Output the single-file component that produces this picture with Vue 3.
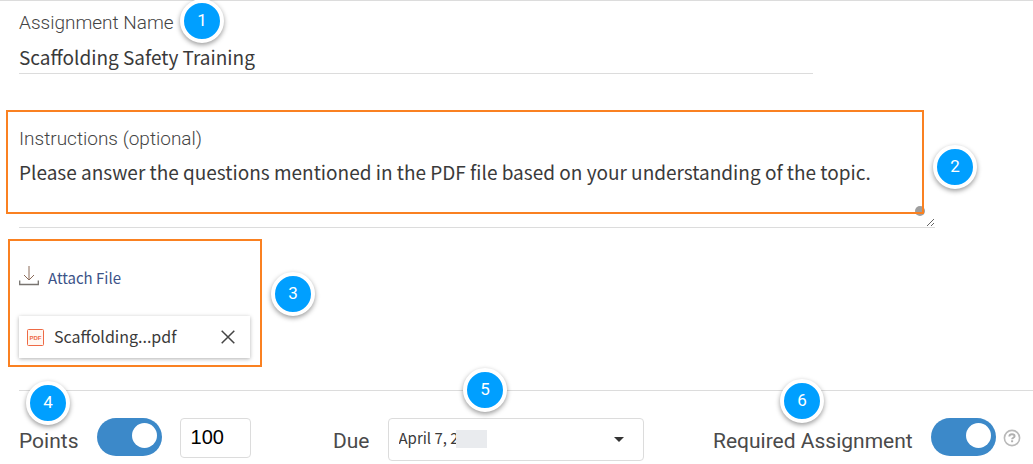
<template>
  <form class="assignment-form" @submit.prevent>
    <div class="field name-field">
      <label class="field-label" for="assignment-name">Assignment Name</label>
      <input
        id="assignment-name"
        v-model="name"
        type="text"
        class="field-input"
      />
      <span class="step step-1">1</span>
    </div>

    <div class="field instructions-field">
      <label class="field-label" for="instructions"
        >Instructions (optional)</label
      >
      <textarea
        id="instructions"
        v-model="instructions"
        class="field-input field-textarea"
        spellcheck="false"
      ></textarea>
      <span class="handle"></span>
      <span class="highlight highlight-instructions"></span>
      <span class="step step-2">2</span>
    </div>

    <div class="attach">
      <a href="#" class="attach-link" @click.prevent>
        <svg class="attach-icon" viewBox="0 0 20 20" fill="none">
          <path d="M10 0v14M5 9l5 5 5-5" stroke="#8a6a58" />
          <path d="M.7 14.500v4h18.600v-4" stroke="#77736f" stroke-width="1.300" />
        </svg>
        <span>Attach File</span>
      </a>

      <div v-if="file" class="file-card">
        <svg class="pdf-icon" viewBox="0 0 17 17">
          <rect
            x="0.500"
            y="0.500"
            width="16"
            height="16"
            rx="1"
            fill="#fff8f3"
            stroke="#ee6a45"
          />
          <text x="8.500" y="11" text-anchor="middle" class="pdf-text">PDF</text>
        </svg>
        <span class="file-name">{{ file }}</span>
        <button
          type="button"
          class="remove-button"
          aria-label="Remove file"
          @click="file = ''"
        >
          <svg viewBox="0 0 14 14" fill="none">
            <path d="M.7.7l12.600 12.600M13.300.7L.7 13.300" stroke="#444" stroke-width="1.500" />
          </svg>
        </button>
      </div>
      <span class="highlight highlight-attach"></span>
      <span class="step step-3">3</span>
    </div>

    <div class="options">
      <div class="option">
        <label class="option-label" for="points-on">Points</label>
        <input id="points-on" v-model="pointsOn" type="checkbox" class="toggle" />
        <input
          v-model="points"
          type="text"
          class="points-input"
          aria-label="Points value"
        />
        <span class="step step-4">4</span>
      </div>

      <div class="option">
        <label class="option-label" for="due">Due</label>
        <div class="select-box">
          <select id="due" v-model="due" class="due-select">
            <option>April 7, 2</option>
          </select>
          <span class="year-cover"></span>
          <span class="caret"></span>
        </div>
        <span class="step step-5">5</span>
      </div>

      <div class="option">
        <label class="option-label" for="required">Required Assignment</label>
        <input id="required" v-model="required" type="checkbox" class="toggle" />
        <button type="button" class="help-button" aria-label="Help">
          <svg viewBox="0 0 18 18" fill="none">
            <circle cx="9" cy="9" r="7.600" stroke="#b9b9b9" stroke-width="1.600" />
            <path
              d="M6.300 7.500C6.400 6 7.500 5.300 9 5.300s2.600.7 2.600 1.900c0 1.600-2.500 1.500-2.500 3.100"
              stroke="#b0b0b0"
              stroke-width="1.900"
            />
            <path d="M8.100 11.300h2v1.900h-2z" fill="#b0b0b0" />
          </svg>
        </button>
        <span class="step step-6">6</span>
      </div>
    </div>
  </form>
</template>

<script setup>
import { ref } from "vue";

const name = ref("Scaffolding Safety Training");
const instructions = ref(
  "Please answer the questions mentioned in the PDF file based on your understanding of the topic."
);
const file = ref("Scaffolding...pdf");
const pointsOn = ref(true);
const points = ref("100");
const due = ref("April 7, 2");
const required = ref(true);
</script>

<style>
body {
  margin: 0;
  background: #fff;
}
</style>

<style scoped>
.assignment-form {
  border-top: 1px solid #dcdcdc;
  padding: 10px 0 0 19px;
  font-family: "Noto Sans CJK SC", sans-serif;
  color: #3a3a3a;
}

.assignment-form *,
.assignment-form {
  box-sizing: border-box;
}

.field,
.attach,
.option,
.select-box {
  position: relative;
}

.name-field {
  max-width: 794px;
}

.instructions-field {
  max-width: 916px;
  margin-top: 53px;
}

.field-label {
  display: block;
  margin-bottom: 7px;
  font-family: Roboto, sans-serif;
  font-size: 19px;
  font-weight: 300;
  line-height: 24px;
  color: #444;
}

.field-input {
  display: block;
  width: 100%;
  height: 32px;
  padding: 0 0 2px;
  border: none;
  border-bottom: 1px solid #dcdcdc;
  outline: none;
  background: transparent;
  font-family: inherit;
  font-size: 19px;
  line-height: 28px;
  color: #3a3a3a;
}

.field-textarea {
  height: 70px;
  resize: both;
}

.highlight {
  position: absolute;
  border: 2px solid #fa8121;
  pointer-events: none;
}

.highlight-instructions {
  top: -17px;
  left: -13px;
  right: 11px;
  bottom: 14px;
}

.highlight-attach {
  top: -27px;
  left: -11px;
  width: 254px;
  bottom: -9px;
}

.handle {
  position: absolute;
  right: 10px;
  bottom: 12px;
  width: 10px;
  height: 10px;
  border-radius: 50%;
  background: #9e9e9e;
}

.step {
  position: absolute;
  width: 44px;
  height: 44px;
  border: 4px solid #fff;
  border-radius: 50%;
  background: #009fff;
  box-shadow: 0 2px 5px rgba(0, 0, 0, 0.4);
  font-family: Roboto, sans-serif;
  font-size: 17px;
  line-height: 34px;
  text-align: center;
  color: #fff;
}

.step-1 {
  top: -12px;
  left: 161px;
}

.step-2 {
  top: 18px;
  right: -42px;
}

.step-3 {
  top: 6px;
  left: 252px;
}

.step-4 {
  top: -37px;
  left: 7px;
}

.step-5 {
  top: -50px;
  left: 130px;
}

.step-6 {
  top: -39px;
  left: 67px;
}

.attach {
  margin-top: 38px;
}

.attach-link {
  display: flex;
  align-items: center;
  gap: 9px;
  width: fit-content;
  height: 24px;
  font-size: 15px;
  line-height: 24px;
  color: #3c5388;
  text-decoration: none;
}

.attach-icon {
  width: 20px;
  height: 20px;
  margin-bottom: 4px;
}

.file-card {
  display: flex;
  align-items: center;
  width: 231px;
  height: 42px;
  margin-top: 26px;
  padding: 0 14px 0 8px;
  background: #fff;
  box-shadow: 0 1px 4px rgba(0, 0, 0, 0.3);
}

.pdf-icon {
  width: 17px;
  height: 17px;
}

.pdf-text {
  font-family: "Liberation Sans", sans-serif;
  font-size: 6px;
  font-weight: 700;
  fill: #ee6a45;
}

.file-name {
  flex: 1;
  margin-left: 10px;
  padding-bottom: 2px;
  font-size: 16px;
  line-height: 24px;
}

.remove-button,
.help-button {
  display: flex;
  padding: 0;
  border: none;
  background: none;
  cursor: pointer;
}

.remove-button svg {
  width: 16px;
  height: 14px;
}

.options {
  display: grid;
  grid-template-columns: 314fr 380fr 308fr;
  margin-top: 32px;
  padding: 27px 12px 0 0;
  border-top: 1px solid #dcdcdc;
}

.option {
  display: flex;
  align-items: flex-start;
}

.option-label {
  font-family: Roboto, sans-serif;
  font-size: 21px;
  line-height: 46px;
  color: #4a4a4a;
  white-space: nowrap;
}

.toggle {
  appearance: none;
  flex: none;
  width: 65px;
  height: 38px;
  margin: 0 0 0 18px;
  padding: 5px;
  border-radius: 19px;
  background: #3c89c9;
  cursor: pointer;
}

.toggle::before {
  content: "";
  display: block;
  width: 25px;
  height: 25px;
  border-radius: 50%;
  background: #fff;
}

.toggle:checked::before {
  margin-left: 30px;
}

.points-input {
  width: 71px;
  height: 40px;
  margin-left: 18px;
  padding: 0 10px 2px;
  border: 1px solid #dcdcdc;
  border-radius: 4px;
  font-family: "Liberation Sans", sans-serif;
  font-size: 20px;
  color: #000;
}

.select-box {
  width: 256px;
  margin-left: 18px;
}

.due-select {
  appearance: none;
  display: block;
  width: 100%;
  height: 43px;
  padding: 0 10px 4px;
  border: 1px solid #dcdcdc;
  border-radius: 4px;
  background: #fff;
  font-family: inherit;
  font-size: 15px;
  color: #3a3a3a;
}

.year-cover {
  position: absolute;
  top: 12px;
  left: 68px;
  width: 31px;
  height: 18px;
  background: #e9ebee;
}

.caret {
  position: absolute;
  top: 19px;
  right: 20px;
  border: 5px solid transparent;
  border-top-color: #333;
  border-bottom: none;
  pointer-events: none;
}

.help-button {
  margin: 11px 0 0 7px;
}

.help-button svg {
  width: 18px;
  height: 18px;
}
</style>
